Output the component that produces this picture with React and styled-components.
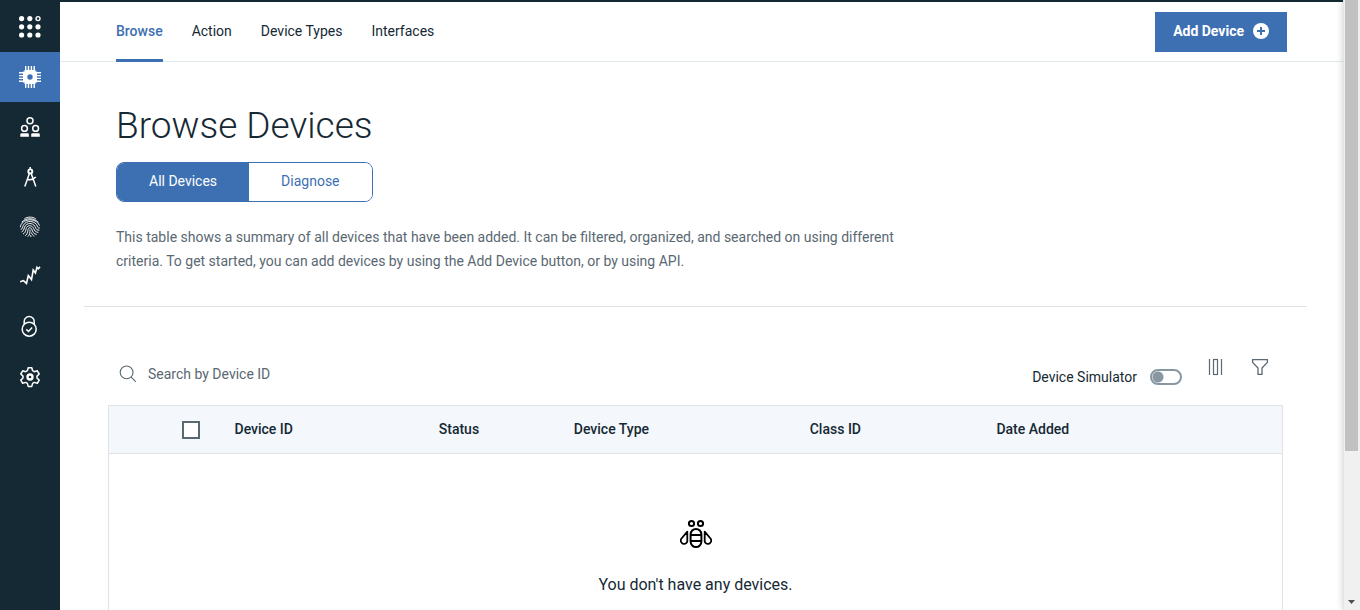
import React from "react";
import styled, { createGlobalStyle, css } from "styled-components";

const navy = "#152934";
const blue = "#3d70b2";
const slate = "#5a6872";
const line = "#dfe3e6";

const GlobalStyle = createGlobalStyle`
  *, *::before, *::after { box-sizing: border-box; }
  body {
    margin: 0;
    background: #fff;
    color: ${navy};
    font-family: Roboto, "Liberation Sans", sans-serif;
    font-size: 14px;
    line-height: 24px;
  }
  button, input { font: inherit; color: inherit; }
  h1, p { margin: 0; }
`;

const Shell = styled.div`
  display: flex;
  height: 100vh;
  overflow: hidden;
`;

const Page = styled.div`
  flex: 1;
  min-width: 0;
  display: flex;
  border-top: 2px solid ${navy};
`;

const Sidebar = styled.nav`
  flex: none;
  width: 60px;
  display: flex;
  flex-direction: column;
  background: ${navy};
`;

const SideLink = styled.a`
  display: flex;
  align-items: center;
  justify-content: center;
  height: 50px;
  color: #fff;
  background: ${(p) => (p.$active ? blue : "transparent")};
`;

const Main = styled.main`
  flex: 1;
  min-width: 0;
`;

const TopBar = styled.header`
  display: flex;
  align-items: flex-start;
  justify-content: space-between;
  height: 60px;
  padding: 0 56px;
  border-bottom: 1px solid #dfe9ea;
`;

const Tabs = styled.nav`
  display: flex;
  gap: 29px;
`;

const Tab = styled.a`
  height: 60px;
  padding-top: 17px;
  text-decoration: none;
  color: ${(p) => (p.$active ? blue : navy)};
  font-weight: ${(p) => (p.$active ? 500 : 400)};
  border-bottom: 3px solid ${(p) => (p.$active ? blue : "transparent")};
`;

const AddButton = styled.button`
  display: flex;
  align-items: center;
  gap: 8px;
  height: 40px;
  margin-top: 10px;
  padding: 0 17px 2px 18px;
  border: 0;
  background: ${blue};
  color: #fff;
  font-weight: 700;
`;

const Content = styled.div`
  padding: 0 36px 0 24px;
`;

const Intro = styled.section`
  padding: 40px 32px 33px;
  border-bottom: 1px solid ${line};
`;

const Title = styled.h1`
  font-size: 37px;
  line-height: 48px;
  font-weight: 300;
`;

const Segments = styled.div`
  display: flex;
  width: fit-content;
  margin: 12px 0 23px;
  border: 1px solid ${blue};
  border-radius: 8px;
  overflow: hidden;
`;

const Segment = styled.button`
  height: 38px;
  padding: 0 32px 2px;
  border: 0;
  background: ${(p) => (p.$active ? blue : "#fff")};
  color: ${(p) => (p.$active ? "#fff" : blue)};
`;

const Description = styled.p`
  max-width: 800px;
  color: ${slate};
`;

const Devices = styled.section`
  padding: 48px 24px 0;
`;

const Toolbar = styled.div`
  display: flex;
  align-items: flex-start;
  justify-content: space-between;
  height: 50px;
  padding: 0 11px 0 8px;
`;

const Search = styled.label`
  display: flex;
  align-items: center;
  gap: 8px;
  padding-top: 7px;
  color: ${slate};
`;

const SearchInput = styled.input`
  width: 280px;
  border: 0;
  padding: 0;
  outline: 0;
  background: transparent;
  &::placeholder { color: ${slate}; opacity: 1; }
`;

const Tools = styled.div`
  display: flex;
  align-items: flex-start;
  gap: 20px;
`;

const SwitchLabel = styled.label`
  display: flex;
  align-items: center;
  gap: 13px;
  padding: 10px 2px 0 0;
`;

const Switch = styled.input`
  appearance: none;
  width: 32px;
  height: 16px;
  margin: 0;
  border: 2px solid #8897a2;
  border-radius: 8px;
  background: radial-gradient(circle at 6px 6px, #8897a2 5px, transparent 6px);
`;

const IconButton = styled.button`
  display: flex;
  align-items: center;
  justify-content: center;
  width: 24px;
  height: 24px;
  padding: 0;
  border: 0;
  background: transparent;
  color: ${slate};
`;

const Table = styled.table`
  width: 100%;
  table-layout: fixed;
  border-collapse: collapse;
  border: 1px solid ${line};
`;

const HeadRow = styled.tr`
  height: 48px;
  background: #f4f7fb;
  border-bottom: 1px solid ${line};
`;

const cell = css`
  padding: 0;
  text-align: left;
  font-weight: 500;
`;

const HeadCell = styled.th`
  ${cell}
  padding-bottom: 2px;
  width: ${(p) => p.$width};
`;

const SelectCell = styled.th`
  ${cell}
  width: 126px;
  padding-left: 73px;
`;

const Checkbox = styled.input`
  appearance: none;
  display: block;
  width: 18px;
  height: 18px;
  margin: 0;
  border: 2px solid ${slate};
  background: #fff;
`;

const EmptyCell = styled.td`
  padding: 64px 0 120px;
  text-align: center;
  font-size: 16px;
`;

const EmptyIcon = styled.div`
  display: flex;
  justify-content: center;
  margin-bottom: 23px;
  color: #000;
`;

const ScrollTrack = styled.div`
  flex: none;
  display: flex;
  flex-direction: column;
  justify-content: space-between;
  align-items: center;
  width: 17px;
  padding-right: 1px;
  background: #f0f0f0;
  border-left: 1px solid #e4e4e4;
  box-shadow: 0 0 7px rgba(0, 0, 0, 0.2);
`;

const ScrollThumb = styled.div`
  width: 13px;
  height: 74%;
  background: #c1c1c1;
`;

const ScrollArrow = styled.svg`
  margin-bottom: 6px;
`;

const Stroke = ({ size = 24, width = 1.5, children }) => (
  <svg width={size} height={size} viewBox={`0 0 ${size} ${size}`} fill="none" stroke="currentColor" strokeWidth={width} aria-hidden="true">
    {children}
  </svg>
);

const AppsIcon = () => (
  <Stroke>
    {[3.6, 11.8, 20].map((y, row) =>
      [3.6, 11.8, 20].map((x, col) =>
        row === 0 && col === 2 ? (
          <circle key="ring" cx={x} cy={y} r="2" strokeWidth="1.400" />
        ) : (
          <circle key={`${x}-${y}`} cx={x} cy={y} r="2.600" fill="currentColor" stroke="none" />
        )
      )
    )}
  </Stroke>
);

const ChipIcon = () => (
  <Stroke width={1.4}>
    <path d="M7.700 1v22M10.500 1v22M13.400 1v22M16.200 1v22M1 7.800h22M1 10.600h22M1 13.400h22M1 16.200h22" />
    <path d="M6.500 5h11v1.500H19v11h-1.500V19h-11v-1.500H5v-11h1.500z" fill="currentColor" stroke="none" />
    <circle cx="12" cy="12" r="2.700" fill={blue} stroke="none" />
  </Stroke>
);

const MembersIcon = () => (
  <Stroke>
    <circle cx="12" cy="5.800" r="3" />
    <circle cx="6.500" cy="13.400" r="2.900" />
    <circle cx="17.600" cy="13.400" r="2.900" />
    <path d="M2.300 21.800v-2.200q0-1.400 1.400-1.400h5.800q1.400 0 1.400 1.400v2.200zM13.200 21.800v-2.200q0-1.400 1.400-1.400h5.800q1.400 0 1.400 1.400v2.200z" fill="currentColor" stroke="none" />
  </Stroke>
);

const CompassIcon = () => (
  <Stroke>
    <path d="M12.200 2v3M11.500 8.200 6.800 21.400M13.100 8.200l4.700 13.200M8.800 14.200c3 .9 6.300.6 9-2.200" />
    <circle cx="12.300" cy="6.400" r="2" strokeWidth="1.900" />
  </Stroke>
);

const FingerprintIcon = () => (
  <Stroke width={0.95}>
    <path d="M6.300 3.900C9.500 1.500 14.600 1.500 17.800 3.900M3.700 7.200C7.700 2.600 16.200 2.500 20.400 7.500M2.300 12.200C3.200 3.900 17.600 1.700 21.500 10.500M2.700 14.700C4.600 13.800 4.500 12.100 5.200 10.600 8 4.500 17.600 5.300 19.700 11.800 20.200 13.200 21 13.300 21.800 12.800M3.600 17C6.600 15.500 5.700 12.500 7.600 10.400 10.700 7 16.200 8.500 17.500 12.500 18.100 14.500 19.300 15.400 21.400 15.100M5 19.100C8.500 17.100 7.300 13.900 9.100 11.800 11 9.800 14.700 10.800 15.600 13.400 16.300 15.700 17.800 17.200 20.300 17.400M7.200 20.700C10.300 18.600 9.300 15.800 10.400 13.700 11.300 12.100 13.300 12.700 13.800 14.300 14.400 16.700 15.700 18.800 18.600 19.500M9.700 21.700C12 19.900 12 17.500 12 14.600M13.400 17.600C14 19.400 14.900 20.600 16.400 21.200M12.500 20.200l.6 1.800" />
  </Stroke>
);

const UsageIcon = () => (
  <Stroke width={1.6}>
    <path d="m2.200 16.800 3.300-1.200 3 2.800 1.800-7.800 3.200 4L15.200 5l2.200 3L19 2.400l1.300 1.400L22 1.900" />
  </Stroke>
);

const LockIcon = () => (
  <Stroke>
    <circle cx="11.200" cy="14.200" r="7" />
    <path d="M6.200 9.200V6.600a5 5 0 0 1 10 0v2.600M8.300 14.400l2.200 2.100 3.600-4" />
  </Stroke>
);

const GearIcon = () => (
  <Stroke>
    <path d="M10.200 2.700h3.600l.8 3 1.700 1 3-.9 1.900 3.200-2.200 2.100v1.900l2.200 2.100-1.900 3.200-3-.9-1.700 1-.8 3h-3.600l-.8-3-1.700-1-3 .9-1.900-3.200L5 13v-1.900L2.800 9l1.900-3.200 3 .9 1.700-1z" strokeLinejoin="round" />
    <circle cx="12" cy="12" r="2.500" strokeWidth="2.400" />
  </Stroke>
);

const PlusCircle = () => (
  <svg width="18" height="18" viewBox="0 0 18 18" aria-hidden="true">
    <circle cx="9" cy="9" r="8" fill="#fff" />
    <path d="M9 5v8M5 9h8" stroke={blue} strokeWidth="2" />
  </svg>
);

const SearchIcon = () => (
  <Stroke width={1.1}>
    <circle cx="10.600" cy="10.400" r="6.400" />
    <path d="m15.200 15.100 4.700 4.700" />
  </Stroke>
);

const ColumnsIcon = () => (
  <Stroke width={1.2}>
    <path d="M5.500 4v16M17.500 4v16" />
    <rect x="9.500" y="4.500" width="4" height="15" />
  </Stroke>
);

const FilterIcon = () => (
  <Stroke width={1.3}>
    <path d="M4.600 4.600h14.800v2.800L14 13v6.400h-4V13L4.600 7.400z" strokeLinejoin="round" />
  </Stroke>
);

const BeeIcon = () => (
  <Stroke size={32} width={2}>
    <circle cx="11.500" cy="5.500" r="2.600" />
    <circle cx="20.500" cy="5.500" r="2.600" />
    <rect x="10.600" y="11" width="10.800" height="18" rx="5.400" />
    <path d="M10.600 17h10.800M10.600 23h10.800M7.300 13.700v8.400a3.300 3.300 0 1 1-5.800-1.600zM24.700 13.700v8.400a3.300 3.300 0 1 0 5.800-1.600z" strokeLinejoin="round" strokeWidth="1.800" />
  </Stroke>
);

const sections = [
  ["Applications", AppsIcon],
  ["Devices", ChipIcon],
  ["Members", MembersIcon],
  ["Design", CompassIcon],
  ["Access", FingerprintIcon],
  ["Usage", UsageIcon],
  ["Security", LockIcon],
  ["Settings", GearIcon],
];

const columns = [
  ["Device ID", "17.4%"],
  ["Status", "11.5%"],
  ["Device Type", "20.1%"],
  ["Class ID", "15.9%"],
  ["Date Added", "auto"],
];

export default function App() {
  return (
    <>
      <GlobalStyle />
      <Shell>
        <Page>
          <Sidebar aria-label="Sections">
            {sections.map(([name, Icon]) => (
              <SideLink key={name} href="#" aria-label={name} $active={name === "Devices"}>
                <Icon />
              </SideLink>
            ))}
          </Sidebar>
          <Main>
            <TopBar>
              <Tabs>
                {["Browse", "Action", "Device Types", "Interfaces"].map((tab) => (
                  <Tab key={tab} href="#" $active={tab === "Browse"}>
                    {tab}
                  </Tab>
                ))}
              </Tabs>
              <AddButton type="button">
                Add Device
                <PlusCircle />
              </AddButton>
            </TopBar>
            <Content>
              <Intro>
                <Title>Browse Devices</Title>
                <Segments>
                  <Segment type="button" $active>All Devices</Segment>
                  <Segment type="button">Diagnose</Segment>
                </Segments>
                <Description>
                  This table shows a summary of all devices that have been added. It can be filtered, organized, and
                  searched on using different criteria. To get started, you can add devices by using the Add Device
                  button, or by using API.
                </Description>
              </Intro>
              <Devices>
                <Toolbar>
                  <Search>
                    <SearchIcon />
                    <SearchInput type="text" placeholder="Search by Device ID" aria-label="Search by Device ID" />
                  </Search>
                  <Tools>
                    <SwitchLabel>
                      Device Simulator
                      <Switch type="checkbox" role="switch" />
                    </SwitchLabel>
                    <IconButton type="button" aria-label="Columns"><ColumnsIcon /></IconButton>
                    <IconButton type="button" aria-label="Filter"><FilterIcon /></IconButton>
                  </Tools>
                </Toolbar>
                <Table>
                  <thead>
                    <HeadRow>
                      <SelectCell scope="col"><Checkbox type="checkbox" aria-label="Select all devices" /></SelectCell>
                      {columns.map(([name, width]) => (
                        <HeadCell key={name} scope="col" $width={width}>{name}</HeadCell>
                      ))}
                    </HeadRow>
                  </thead>
                  <tbody>
                    <tr>
                      <EmptyCell colSpan={6}>
                        <EmptyIcon><BeeIcon /></EmptyIcon>
                        You don't have any devices.
                      </EmptyCell>
                    </tr>
                  </tbody>
                </Table>
              </Devices>
            </Content>
          </Main>
        </Page>
        <ScrollTrack aria-hidden="true">
          <ScrollThumb />
          <ScrollArrow width="7" height="4" viewBox="0 0 7 4">
            <path d="M0 0h7L3.500 4z" fill="#505050" />
          </ScrollArrow>
        </ScrollTrack>
      </Shell>
    </>
  );
}
